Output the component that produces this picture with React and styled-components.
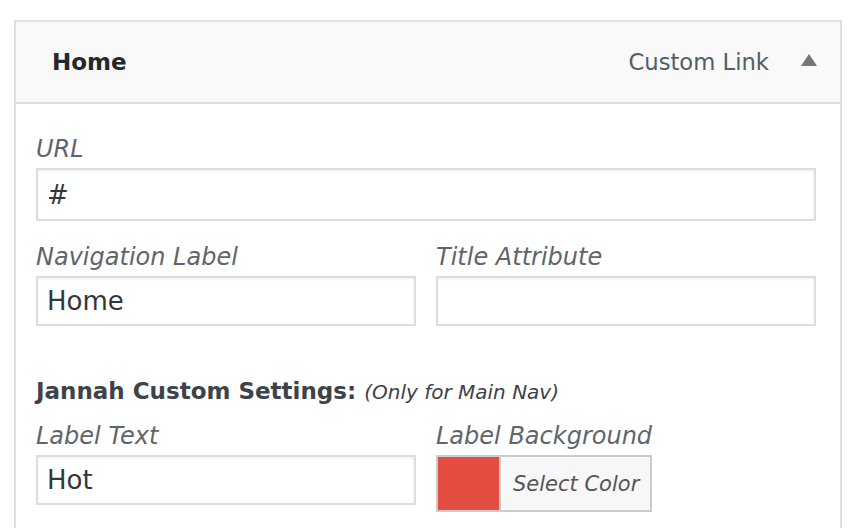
import styled, { createGlobalStyle } from "styled-components";

const GlobalStyle = createGlobalStyle`
  html, body {
    margin: 0;
    padding: 0;
    background: #fff;
  }
  body {
    font-family: "DejaVu Sans", "Liberation Sans", sans-serif;
    color: #32373c;
  }
`;

const Page = styled.div`
  padding: 20px 10px 0 14px;
  height: 508px;
  overflow: hidden;
`;

const Item = styled.div`
  width: 824px;
  min-height: 560px;
  border: 2px solid #dfdfdf;
  background: #fff;
`;

const ItemBar = styled.div`
  display: flex;
  align-items: center;
  height: 80px;
  padding: 0 23px 0 36px;
  background: #f9f9f9;
  border-bottom: 2px solid #dfdfdf;
`;

const ItemTitle = styled.span`
  font-size: 23px;
  font-weight: 700;
  color: #23282d;
  margin-right: auto;
`;

const ItemType = styled.span`
  font-size: 22.7px;
  color: #555d66;
  margin-right: 32px;
`;

const Arrow = styled.span`
  width: 0;
  height: 0;
  border-left: 8px solid transparent;
  border-right: 8px solid transparent;
  border-bottom: 12px solid #72777c;
  margin-bottom: 4px;
`;

const Settings = styled.div`
  padding: 31px 24px 0 20px;
  display: flex;
  flex-direction: column;
`;

const Row = styled.div`
  display: grid;
  grid-template-columns: ${(p) => (p.$wide ? "1fr" : "1fr 1fr")};
  column-gap: 20px;
  margin-top: ${(p) => p.$space || 0}px;
`;

const Field = styled.label`
  display: flex;
  flex-direction: column;
  gap: 5px;
`;

const Caption = styled.span`
  font-size: 24px;
  font-style: italic;
  color: #60656b;
  line-height: 28px;
  white-space: nowrap;
`;

const TextInput = styled.input`
  box-sizing: border-box;
  width: 100%;
  height: ${(p) => (p.$tall ? "53px" : "50px")};
  padding: 0 9px;
  border: 2px solid #dddddd;
  background: #fff;
  box-shadow: inset 0 1px 3px rgba(0, 0, 0, 0.07);
  font-family: inherit;
  font-size: 26px;
  color: #32373c;
  outline: none;
`;

const SectionTitle = styled.div`
  margin-top: 51px;
  font-size: 23px;
  font-weight: 700;
  color: #3c434a;
  line-height: 28px;
  white-space: nowrap;
`;

const SectionNote = styled.span`
  font-size: 20px;
  font-weight: 400;
  font-style: italic;
  color: #3c434a;
`;

const ColorPicker = styled.div`
  display: flex;
  align-self: flex-start;
  height: 57px;
  box-sizing: border-box;
  border: 2px solid #cccccc;
`;

const Swatch = styled.span`
  width: 61px;
  background: ${(p) => p.$color};
  border-right: 2px solid #cccccc;
`;

const PickButton = styled.span`
  display: flex;
  align-items: center;
  padding: 0 11px 0 12px;
  background: #f7f7f7;
  font-size: 21px;
  font-style: italic;
  color: #555;
  white-space: nowrap;
`;

export default function App() {
  return (
    <>
      <GlobalStyle />
      <Page>
        <Item>
          <ItemBar>
            <ItemTitle>Home</ItemTitle>
            <ItemType>Custom Link</ItemType>
            <Arrow />
          </ItemBar>
          <Settings>
            <Row $wide>
              <Field>
                <Caption>URL</Caption>
                <TextInput $tall defaultValue="#" />
              </Field>
            </Row>
            <Row $space={22}>
              <Field>
                <Caption>Navigation Label</Caption>
                <TextInput defaultValue="Home" />
              </Field>
              <Field>
                <Caption>Title Attribute</Caption>
                <TextInput defaultValue="" />
              </Field>
            </Row>
            <SectionTitle>
              Jannah Custom Settings: <SectionNote>(Only for Main Nav)</SectionNote>
            </SectionTitle>
            <Row $space={16}>
              <Field>
                <Caption>Label Text</Caption>
                <TextInput defaultValue="Hot" />
              </Field>
              <Field>
                <Caption>Label Background</Caption>
                <ColorPicker>
                  <Swatch $color="#e44d42" />
                  <PickButton>Select Color</PickButton>
                </ColorPicker>
              </Field>
            </Row>
          </Settings>
        </Item>
      </Page>
    </>
  );
}
